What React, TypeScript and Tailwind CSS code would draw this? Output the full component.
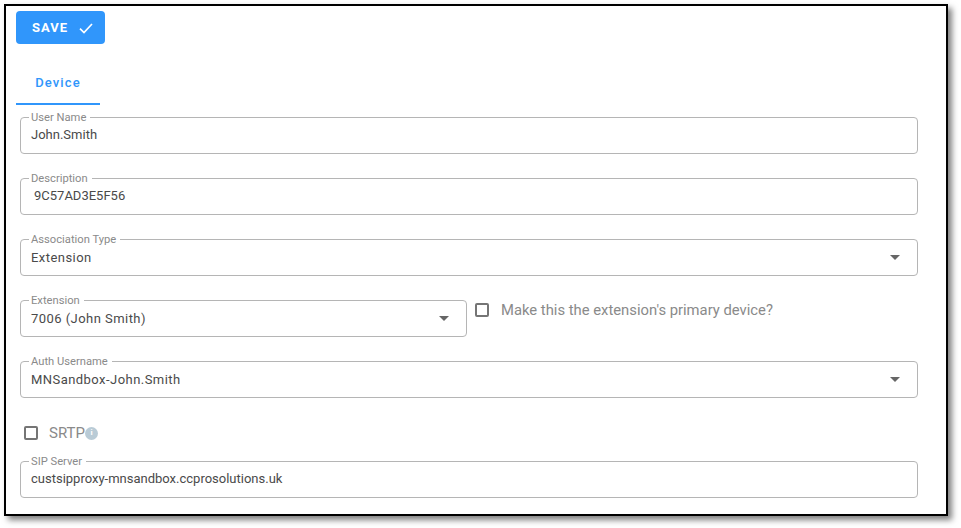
interface FieldProps {
  label: string;
  value: string;
  select?: boolean;
  indent?: boolean;
  wide?: boolean;
  className?: string;
}

function Field({ label, value, select, indent, wide, className }: FieldProps) {
  return (
    <fieldset
      className={`relative h-[41px] rounded-[4px] border border-[#b5b5b5] pl-[8px] ${className ?? "w-[898px]"}`}
    >
      <legend className="h-[8px] pl-[2px] pr-[4px] text-[11.2px] leading-[10px] text-[#8a8a8a]">{label}</legend>
      <div
        className={`text-[13px] leading-[18px] text-[#4a4a4a] ${indent ? "pl-[5px]" : "pl-[2px]"} ${wide ? "mt-[6px] tracking-[0.45px]" : "mt-[5px]"}`}
      >
        {value}
      </div>
      {select && (
        <div className="absolute right-[17px] top-[12px] h-0 w-0 border-x-[5px] border-t-[5px] border-x-transparent border-t-[#666]" />
      )}
    </fieldset>
  );
}

function Checkbox() {
  return <div className="h-[14px] w-[14px] rounded-[2px] border-2 border-[#757575]" />;
}

export default function App() {
  return (
    <div className="h-[528px] w-[961px] bg-white pl-[4px] pt-[4px] font-['Roboto',sans-serif]">
      <div className="h-[512px] w-[944px] border-2 border-black bg-white pl-[10px] pt-[5px] shadow-[4px_4px_6px_rgba(0,0,0,0.5)]">
        <button className="flex h-[33px] w-[89px] items-center rounded-[4px] bg-[#3096fb] pl-[16px] text-[13px] font-bold tracking-[1px] text-white">
          SAVE
          <svg
            className="ml-[10px]"
            width="16"
            height="16"
            viewBox="0 0 24 24"
            fill="none"
            stroke="white"
            strokeWidth="2.5"
          >
            <path d="M3 13l6 6L21 6" />
          </svg>
        </button>
        <div className="mt-[19px] h-[42px] w-[84px] border-b-2 border-[#3096fb] pt-[12px] text-center text-[13px] font-medium leading-[16px] tracking-[1.1px] text-[#3096fb]">
          Device
        </div>
        <div className="ml-[4px] mt-[8px] flex flex-col gap-[20px]">
          <Field label="User Name" value="John.Smith" />
          <Field label="Description" value="9C57AD3E5F56" indent />
          <Field label="Association Type" value="Extension" select wide />
          <div className="flex">
            <Field label="Extension" value="7006 (John Smith)" select wide className="w-[447px]" />
            <div className="ml-[8px] mt-[7px] flex h-[14px] items-center">
              <Checkbox />
              <span className="ml-[12px] text-[14.8px] leading-[14px] text-[#8a8a8a]">
                Make this the extension's primary device?
              </span>
            </div>
          </div>
          <Field label="Auth Username" value="MNSandbox-John.Smith" select wide />
        </div>
        <div className="ml-[8px] mt-[28px] flex h-[14px] items-center">
          <Checkbox />
          <span className="ml-[11px] text-[15px] leading-[14px] text-[#8a8a8a]">SRTP</span>
          <span className="flex h-[13px] w-[13px] items-center justify-center rounded-full bg-[#b9cbd6] text-[8px] font-bold text-white">
            i
          </span>
        </div>
        <Field label="SIP Server" value="custsipproxy-mnsandbox.ccprosolutions.uk" className="ml-[4px] mt-[17px] w-[898px]" />
      </div>
    </div>
  );
}
